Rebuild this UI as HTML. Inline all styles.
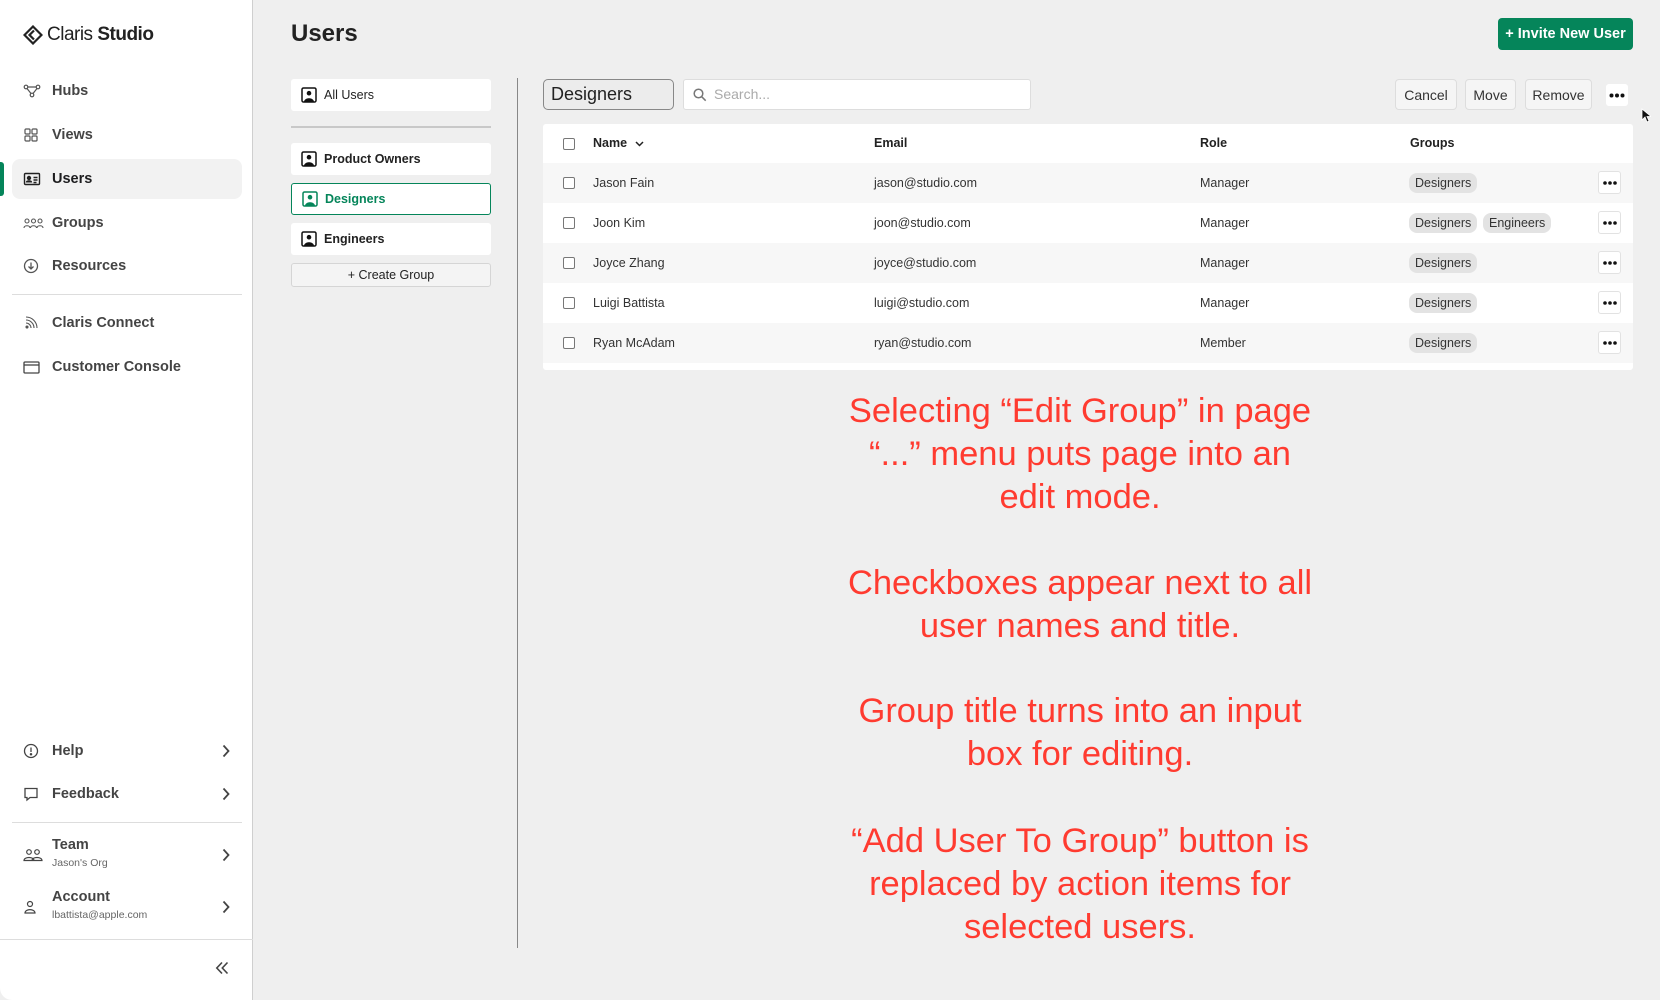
<!DOCTYPE html>
<html><head><meta charset="utf-8"><style>
*{box-sizing:border-box;margin:0;padding:0}
body{width:1660px;height:1000px;background:#efefef;font-family:"Liberation Sans",sans-serif;color:#1d1d1f;position:relative;overflow:hidden}
.abs{position:absolute}
.side{left:0;top:0;width:253px;height:1000px;background:#fff;border-right:1px solid #cfcfcf;border-bottom-left-radius:12px}
.nav{position:absolute;left:12px;width:230px;height:40px;display:flex;align-items:center;font-size:14.5px;font-weight:bold;color:#444}
.nav svg{position:absolute;left:11px}
.nav span{position:absolute;left:40px}
.hr{position:absolute;left:12px;width:230px;height:1px;background:#ddd}
.nav svg.chev{left:auto;right:12px}
.grp{position:absolute;left:291px;width:200px;height:32px;background:#fff;border-radius:3px;display:flex;align-items:center;font-size:12.5px;font-weight:bold;color:#222}
.grp svg{margin-left:10px;margin-right:7px}
.btn{position:absolute;top:79px;height:31px;background:#f5f5f5;border:1px solid #ddd;border-radius:4px;font-size:14px;color:#333;display:flex;align-items:center;justify-content:center}
.row{position:absolute;left:543px;width:1090px;height:40px;font-size:12.5px;color:#333}
.row div{position:absolute;top:0;line-height:40px}
.cb{position:absolute;left:20px;top:14px;width:12px;height:12px;border:1px solid #777;border-radius:2px;background:#fff}
.tag{background:#e3e3e3;border-radius:8px;padding:0 6px;line-height:20px!important;height:20px;top:10px!important;font-size:12.5px}
.dots{width:23px;height:23px;background:#fff;border:1px solid #e2e2e2;border-radius:3px;top:8px!important}
.dots svg{position:absolute;left:4px;top:9px}
.red{position:absolute;left:780px;width:600px;text-align:center;color:#ff3b30;font-size:34.5px;line-height:43px}
</style></head><body>
<div class="abs side">
  <div class="abs" style="left:23px;top:24px;display:flex;align-items:center">
    <svg width="20" height="20" viewBox="0 0 20 20"><path d="M10 1.5 L18.5 10 L10 18.5 L1.5 10 Z" fill="none" stroke="#222" stroke-width="2.2"/><path d="M11 5.5 L6.5 10 L11 14.5" fill="none" stroke="#222" stroke-width="2.2"/></svg>
    <span style="font-size:19px;margin-left:4px;letter-spacing:-0.5px;color:#222">Claris <b>Studio</b></span>
  </div>
  <div class="nav" style="top:71px"><svg width="18" height="16" viewBox="0 0 18 16" fill="none" stroke="#555" stroke-width="1.2"><circle cx="3" cy="4" r="1.8"/><circle cx="15" cy="4" r="1.8"/><circle cx="9" cy="12" r="1.8"/><path d="M5 4h8M4 5.5l4 5M14 5.5l-4 5"/></svg><span>Hubs</span></div>
  <div class="nav" style="top:115px"><svg width="16" height="16" viewBox="0 0 16 16" fill="none" stroke="#555" stroke-width="1.2"><rect x="2" y="2" width="5" height="5" rx="1"/><rect x="9" y="2" width="5" height="5" rx="1"/><rect x="2" y="9" width="5" height="5" rx="1"/><rect x="9" y="9" width="5" height="5" rx="1"/></svg><span>Views</span></div>
  <div class="abs" style="left:0;top:162px;width:4px;height:34px;background:#05855a;border-radius:0 3px 3px 0"></div>
  <div class="nav" style="top:159px;background:#f2f2f2;border-radius:8px;color:#1d1d1f"><svg width="18" height="16" viewBox="0 0 18 16" fill="none" stroke="#222" stroke-width="1.4"><rect x="1.5" y="2.5" width="15" height="11" rx="1"/><circle cx="6" cy="7" r="1.5" fill="#222"/><path d="M3.5 11.5c0-2 5-2 5 0" fill="#222"/><path d="M10.5 6.5h4M10.5 9h4M10.5 11.5h3"/></svg><span>Users</span></div>
  <div class="nav" style="top:203px"><svg width="21" height="14" viewBox="0 0 21 14" fill="none" stroke="#555" stroke-width="1.1"><circle cx="4" cy="5" r="2"/><circle cx="10.5" cy="5" r="2"/><circle cx="17" cy="5" r="2"/><path d="M1 12c0-3 6-3 6 0M7.5 12c0-3 6-3 6 0M14 12c0-3 6-3 6 0"/></svg><span>Groups</span></div>
  <div class="nav" style="top:246px"><svg width="16" height="16" viewBox="0 0 16 16" fill="none" stroke="#555" stroke-width="1.3"><circle cx="8" cy="8" r="6.5"/><path d="M8 4.5v6M5.5 8.5L8 11l2.5-2.5"/></svg><span>Resources</span></div>
  <div class="hr" style="top:294px"></div>
  <div class="nav" style="top:303px"><svg width="16" height="16" viewBox="0 0 16 16" fill="none" stroke="#555" stroke-width="1.1"><circle cx="4" cy="12" r="1" fill="#555"/><path d="M3 8a5 5 0 0 1 5 5M3 5a8 8 0 0 1 8 8M3 2a11 11 0 0 1 11 11"/></svg><span>Claris Connect</span></div>
  <div class="nav" style="top:347px"><svg width="17" height="15" viewBox="0 0 17 15" fill="none" stroke="#444" stroke-width="1.3"><rect x="1" y="2" width="15" height="11" rx="1"/><path d="M1 5h15"/></svg><span>Customer Console</span></div>
  <div class="nav" style="top:731px"><svg width="16" height="16" viewBox="0 0 16 16" fill="none" stroke="#444" stroke-width="1.3"><circle cx="8" cy="8" r="6.5"/><path d="M8 4.5v4.5"/><circle cx="8" cy="11.3" r=".6" fill="#444"/></svg><span>Help</span><svg class="chev" width="8" height="14" viewBox="0 0 8 14" fill="none" stroke="#444" stroke-width="1.8"><path d="M1.5 1.5L6.5 7l-5 5.5"/></svg></div>
  <div class="nav" style="top:774px"><svg width="16" height="16" viewBox="0 0 16 16" fill="none" stroke="#444" stroke-width="1.3"><path d="M2 2.5h12v9H7l-3 2.5v-2.5H2z"/></svg><span>Feedback</span><svg class="chev" width="8" height="14" viewBox="0 0 8 14" fill="none" stroke="#444" stroke-width="1.8"><path d="M1.5 1.5L6.5 7l-5 5.5"/></svg></div>
  <div class="hr" style="top:822px"></div>
  <div class="nav" style="top:831px;height:48px"><svg width="20" height="14" viewBox="0 0 20 14" fill="none" stroke="#444" stroke-width="1.2"><circle cx="6" cy="4" r="2.3"/><circle cx="14" cy="4" r="2.3"/><path d="M1 12.5c0-4 10-4 10 0zM9 12.5c0-4 10-4 10 0z"/></svg><span style="top:6px">Team</span><span style="top:26px;font-size:10.5px;font-weight:normal;color:#666">Jason's Org</span><svg class="chev" width="8" height="14" viewBox="0 0 8 14" fill="none" stroke="#444" stroke-width="1.8"><path d="M1.5 1.5L6.5 7l-5 5.5"/></svg></div>
  <div class="nav" style="top:883px;height:48px"><svg width="14" height="16" viewBox="0 0 14 16" fill="none" stroke="#444" stroke-width="1.2"><circle cx="7" cy="5" r="2.5"/><path d="M2 14c0-4.5 10-4.5 10 0z"/></svg><span style="top:6px">Account</span><span style="top:26px;font-size:10.5px;font-weight:normal;color:#666">lbattista@apple.com</span><svg class="chev" width="8" height="14" viewBox="0 0 8 14" fill="none" stroke="#444" stroke-width="1.8"><path d="M1.5 1.5L6.5 7l-5 5.5"/></svg></div>
  <div class="abs" style="left:0;top:939px;width:253px;height:1px;background:#ddd"></div>
  <svg class="abs" style="left:215px;top:961px" width="14" height="14" viewBox="0 0 14 14" fill="none" stroke="#444" stroke-width="1.6"><path d="M7 1.5L1.8 7 7 12.5M12.5 1.5L7.3 7l5.2 5.5"/></svg>
</div>

<div class="abs" style="left:291px;top:20px;font-size:24px;font-weight:bold;color:#222">Users</div>
<div class="abs" style="left:1498px;top:18px;width:135px;height:32px;background:#05855a;border-radius:4px;color:#fff;font-size:14.5px;font-weight:bold;display:flex;align-items:center;justify-content:center">+ Invite New User</div>

<div class="grp" style="top:79px"><svg width="16" height="16" viewBox="0 0 16 16"><rect x="1" y="1" width="14" height="14" rx="1.5" fill="none" stroke="#111" stroke-width="1.5"/><circle cx="8" cy="6.2" r="2.3" fill="#111"/><path d="M3 15c0-5 10-5 10 0z" fill="#111"/></svg><span style="font-weight:normal;font-size:12.5px">All Users</span></div>
<div class="abs" style="left:291px;top:126px;width:200px;height:2px;background:#c8c8c8"></div>
<div class="grp" style="top:143px"><svg width="16" height="16" viewBox="0 0 16 16"><rect x="1" y="1" width="14" height="14" rx="1.5" fill="none" stroke="#111" stroke-width="1.5"/><circle cx="8" cy="6.2" r="2.3" fill="#111"/><path d="M3 15c0-5 10-5 10 0z" fill="#111"/></svg>Product Owners</div>
<div class="grp" style="top:183px;border:1px solid #05855a;color:#05855a"><svg width="16" height="16" viewBox="0 0 16 16"><rect x="1" y="1" width="14" height="14" rx="1.5" fill="none" stroke="#05855a" stroke-width="1.5"/><circle cx="8" cy="6.2" r="2.3" fill="#05855a"/><path d="M3 15c0-5 10-5 10 0z" fill="#05855a"/></svg>Designers</div>
<div class="grp" style="top:223px"><svg width="16" height="16" viewBox="0 0 16 16"><rect x="1" y="1" width="14" height="14" rx="1.5" fill="none" stroke="#111" stroke-width="1.5"/><circle cx="8" cy="6.2" r="2.3" fill="#111"/><path d="M3 15c0-5 10-5 10 0z" fill="#111"/></svg>Engineers</div>
<div class="abs" style="left:291px;top:263px;width:200px;height:24px;background:#f4f4f4;border:1px solid #d5d5d5;border-radius:3px;font-size:12.5px;text-align:center;line-height:22px;color:#222">+ Create Group</div>

<div class="abs" style="left:517px;top:78px;width:1px;height:870px;background:#888"></div>

<div class="abs" style="left:543px;top:79px;width:131px;height:31px;border:1px solid #888;border-radius:5px;background:#ececec;font-size:18px;line-height:29px;padding-left:7px;color:#222">Designers</div>
<div class="abs" style="left:683px;top:79px;width:348px;height:31px;border:1px solid #ddd;border-radius:3px;background:#fff;font-size:14px;color:#aaa;line-height:29px;padding-left:30px">Search...<svg style="position:absolute;left:9px;top:8px" width="14" height="14" viewBox="0 0 14 14" fill="none" stroke="#777" stroke-width="1.5"><circle cx="5.5" cy="5.5" r="4.3"/><path d="M8.7 8.7l4 4"/></svg></div>
<div class="btn" style="left:1395px;width:62px">Cancel</div>
<div class="btn" style="left:1465px;width:51px">Move</div>
<div class="btn" style="left:1525px;width:67px">Remove</div>
<div class="abs" style="left:1606px;top:84px;width:22px;height:22px;background:#fff;border-radius:3px"><svg style="position:absolute;left:3px;top:9px" width="16" height="5" viewBox="0 0 16 5" fill="#111"><circle cx="2.5" cy="2.5" r="2"/><circle cx="8" cy="2.5" r="2"/><circle cx="13.5" cy="2.5" r="2"/></svg></div>
<svg class="abs" style="left:1641px;top:108px" width="10" height="15" viewBox="0 0 10 15"><path d="M1 1v11l3-3 2 5 2-1-2-4.5h4z" fill="#111" stroke="#fff" stroke-width=".8"/></svg>

<div class="abs" style="left:543px;top:124px;width:1090px;height:246px;background:#fff;border-radius:3px"></div>
<div class="row" style="top:124px;height:39px;font-weight:bold;color:#222"><span class="cb" style="top:14px"></span><div style="left:50px;line-height:39px">Name <svg width="9" height="6" viewBox="0 0 9 6" fill="none" stroke="#222" stroke-width="1.5" style="margin-left:4px;vertical-align:middle"><path d="M1 1l3.5 3.5L8 1"/></svg></div><div style="left:331px;line-height:39px">Email</div><div style="left:657px;line-height:39px">Role</div><div style="left:867px;line-height:39px">Groups</div></div>

<div class="row" style="top:163px;background:#f7f7f7"><span class="cb"></span><div style="left:50px">Jason Fain</div><div style="left:331px">jason@studio.com</div><div style="left:657px">Manager</div><div class="tag" style="left:866px">Designers</div><div class="dots" style="left:1055px"><svg width="14" height="4" viewBox="0 0 14 4" fill="#111"><circle cx="2" cy="2" r="1.8"/><circle cx="7" cy="2" r="1.8"/><circle cx="12" cy="2" r="1.8"/></svg></div></div>
<div class="row" style="top:203px"><span class="cb"></span><div style="left:50px">Joon Kim</div><div style="left:331px">joon@studio.com</div><div style="left:657px">Manager</div><div class="tag" style="left:866px">Designers</div><div class="tag" style="left:940px">Engineers</div><div class="dots" style="left:1055px"><svg width="14" height="4" viewBox="0 0 14 4" fill="#111"><circle cx="2" cy="2" r="1.8"/><circle cx="7" cy="2" r="1.8"/><circle cx="12" cy="2" r="1.8"/></svg></div></div>
<div class="row" style="top:243px;background:#f7f7f7"><span class="cb"></span><div style="left:50px">Joyce Zhang</div><div style="left:331px">joyce@studio.com</div><div style="left:657px">Manager</div><div class="tag" style="left:866px">Designers</div><div class="dots" style="left:1055px"><svg width="14" height="4" viewBox="0 0 14 4" fill="#111"><circle cx="2" cy="2" r="1.8"/><circle cx="7" cy="2" r="1.8"/><circle cx="12" cy="2" r="1.8"/></svg></div></div>
<div class="row" style="top:283px"><span class="cb"></span><div style="left:50px">Luigi Battista</div><div style="left:331px">luigi@studio.com</div><div style="left:657px">Manager</div><div class="tag" style="left:866px">Designers</div><div class="dots" style="left:1055px"><svg width="14" height="4" viewBox="0 0 14 4" fill="#111"><circle cx="2" cy="2" r="1.8"/><circle cx="7" cy="2" r="1.8"/><circle cx="12" cy="2" r="1.8"/></svg></div></div>
<div class="row" style="top:323px;background:#f7f7f7"><span class="cb"></span><div style="left:50px">Ryan McAdam</div><div style="left:331px">ryan@studio.com</div><div style="left:657px">Member</div><div class="tag" style="left:866px">Designers</div><div class="dots" style="left:1055px"><svg width="14" height="4" viewBox="0 0 14 4" fill="#111"><circle cx="2" cy="2" r="1.8"/><circle cx="7" cy="2" r="1.8"/><circle cx="12" cy="2" r="1.8"/></svg></div></div>

<div class="red" style="top:390px">Selecting “Edit Group” in page<br>“...” menu puts page into an<br>edit mode.</div>
<div class="red" style="top:562px">Checkboxes appear next to all<br>user names and title.</div>
<div class="red" style="top:690px">Group title turns into an input<br>box for editing.</div>
<div class="red" style="top:820px">“Add User To Group” button is<br>replaced by action items for<br>selected users.</div>
</body></html>
